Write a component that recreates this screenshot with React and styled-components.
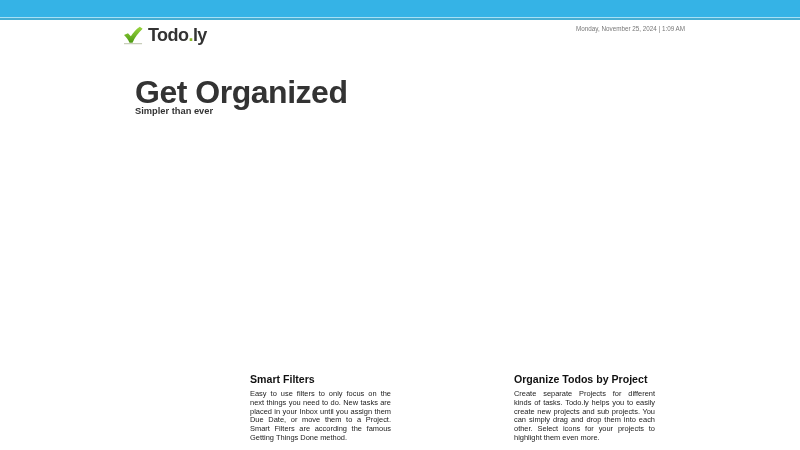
import React from "react";
import styled, { createGlobalStyle } from "styled-components";

const GlobalStyle = createGlobalStyle`
  html, body {
    margin: 0;
    padding: 0;
    background: #fff;
    font-family: "Liberation Sans", Arial, sans-serif;
  }
`;

const features = [
  {
    title: "Smart Filters",
    text: "Easy to use filters to only focus on the next things you need to do. New tasks are placed in your Inbox until you assign them Due Date, or move them to a Project. Smart Filters are according the famous Getting Things Done method.",
  },
  {
    title: "Organize Todos by Project",
    text: "Create separate Projects for different kinds of tasks. Todo.ly helps you to easily create new projects and sub projects. You can simply drag and drop them into each other. Select icons for your projects to highlight them even more.",
  },
];

function CheckMark() {
  return (
    <svg width="21" height="19" viewBox="0 0 22 20">
      <defs>
        <linearGradient id="tick" x1="0" y1="0" x2="0" y2="1">
          <stop offset="0" stopColor="#9ad63f" />
          <stop offset="1" stopColor="#4d9a12" />
        </linearGradient>
      </defs>
      <path d="M1 18.6h19" stroke="#c3c9b4" strokeWidth="1.2" />
      <path d="M1 9.500l4.200-2 3 3.400C10.500 7 13.500 3.600 17.600.8l3 2.200C16 7.500 12.500 12 10 17.600H6.800C5.400 14.400 3.400 11.800 1 9.500z" fill="url(#tick)" />
    </svg>
  );
}

function App() {
  return (
    <Page>
      <GlobalStyle />
      <TopBar />
      <Wrapper>
        <Header>
          <Logo>
            <CheckMark />
            <LogoText>Todo<Dot>.</Dot>ly</LogoText>
          </Logo>
          <DateLine>Monday, November 25, 2024 | 1:09 AM</DateLine>
        </Header>
        <Hero>
          <Title>Get Organized</Title>
          <Subtitle>Simpler than ever</Subtitle>
        </Hero>
        <Features>
          {features.map((f) => (
            <Feature key={f.title}>
              <FeatureTitle>{f.title}</FeatureTitle>
              <FeatureText>{f.text}</FeatureText>
            </Feature>
          ))}
        </Features>
      </Wrapper>
    </Page>
  );
}

const Page = styled.div`
  width: 800px;
  height: 450px;
  overflow: hidden;
  background: #fff;
  filter: blur(0.25px);
`;

const TopBar = styled.div`
  height: 17px;
  background: #35b3e6;
  border-bottom: 1px solid #a6e0f5;
  box-shadow: 0 2px 0 #45add2;
  margin-bottom: 2px;
`;

const Wrapper = styled.div`
  width: 570px;
  margin-left: 115px;
`;

const Header = styled.div`
  display: flex;
  justify-content: space-between;
  align-items: flex-start;
  height: 53px;
  padding-left: 8px;
`;

const Logo = styled.div`
  display: flex;
  align-items: center;
  gap: 4px;
  height: 28px;
  margin-top: 1px;
`;

const LogoText = styled.span`
  font-size: 18px;
  font-weight: 700;
  color: #333;
  letter-spacing: -0.55px;
`;

const Dot = styled.span`
  color: #8ab82a;
`;

const DateLine = styled.div`
  font-size: 6.300px;
  line-height: 9px;
  color: #777;
  margin-top: 4px;
`;

const Hero = styled.div`
  box-sizing: border-box;
  padding: 4px 0 0 20px;
  height: 295px;
`;

const Title = styled.h1`
  margin: 0;
  font-size: 32px;
  line-height: 30px;
  font-weight: 700;
  color: #333;
  letter-spacing: -0.48px;
`;

const Subtitle = styled.div`
  font-size: 9.300px;
  line-height: 9px;
  font-weight: 700;
  color: #333;
`;

const Features = styled.div`
  display: flex;
  padding-left: 135px;
  gap: 123px;
  padding-top: 4px;
`;

const Feature = styled.div`
  width: 141px;
`;

const FeatureTitle = styled.h3`
  margin: 0 0 4px;
  font-size: 10.600px;
  line-height: 14px;
  font-weight: 700;
  color: #111;
  white-space: nowrap;
`;

const FeatureText = styled.p`
  margin: 0;
  font-size: 7.450px;
  line-height: 8.800px;
  color: #222;
  text-align: justify;
`;

export default App;
